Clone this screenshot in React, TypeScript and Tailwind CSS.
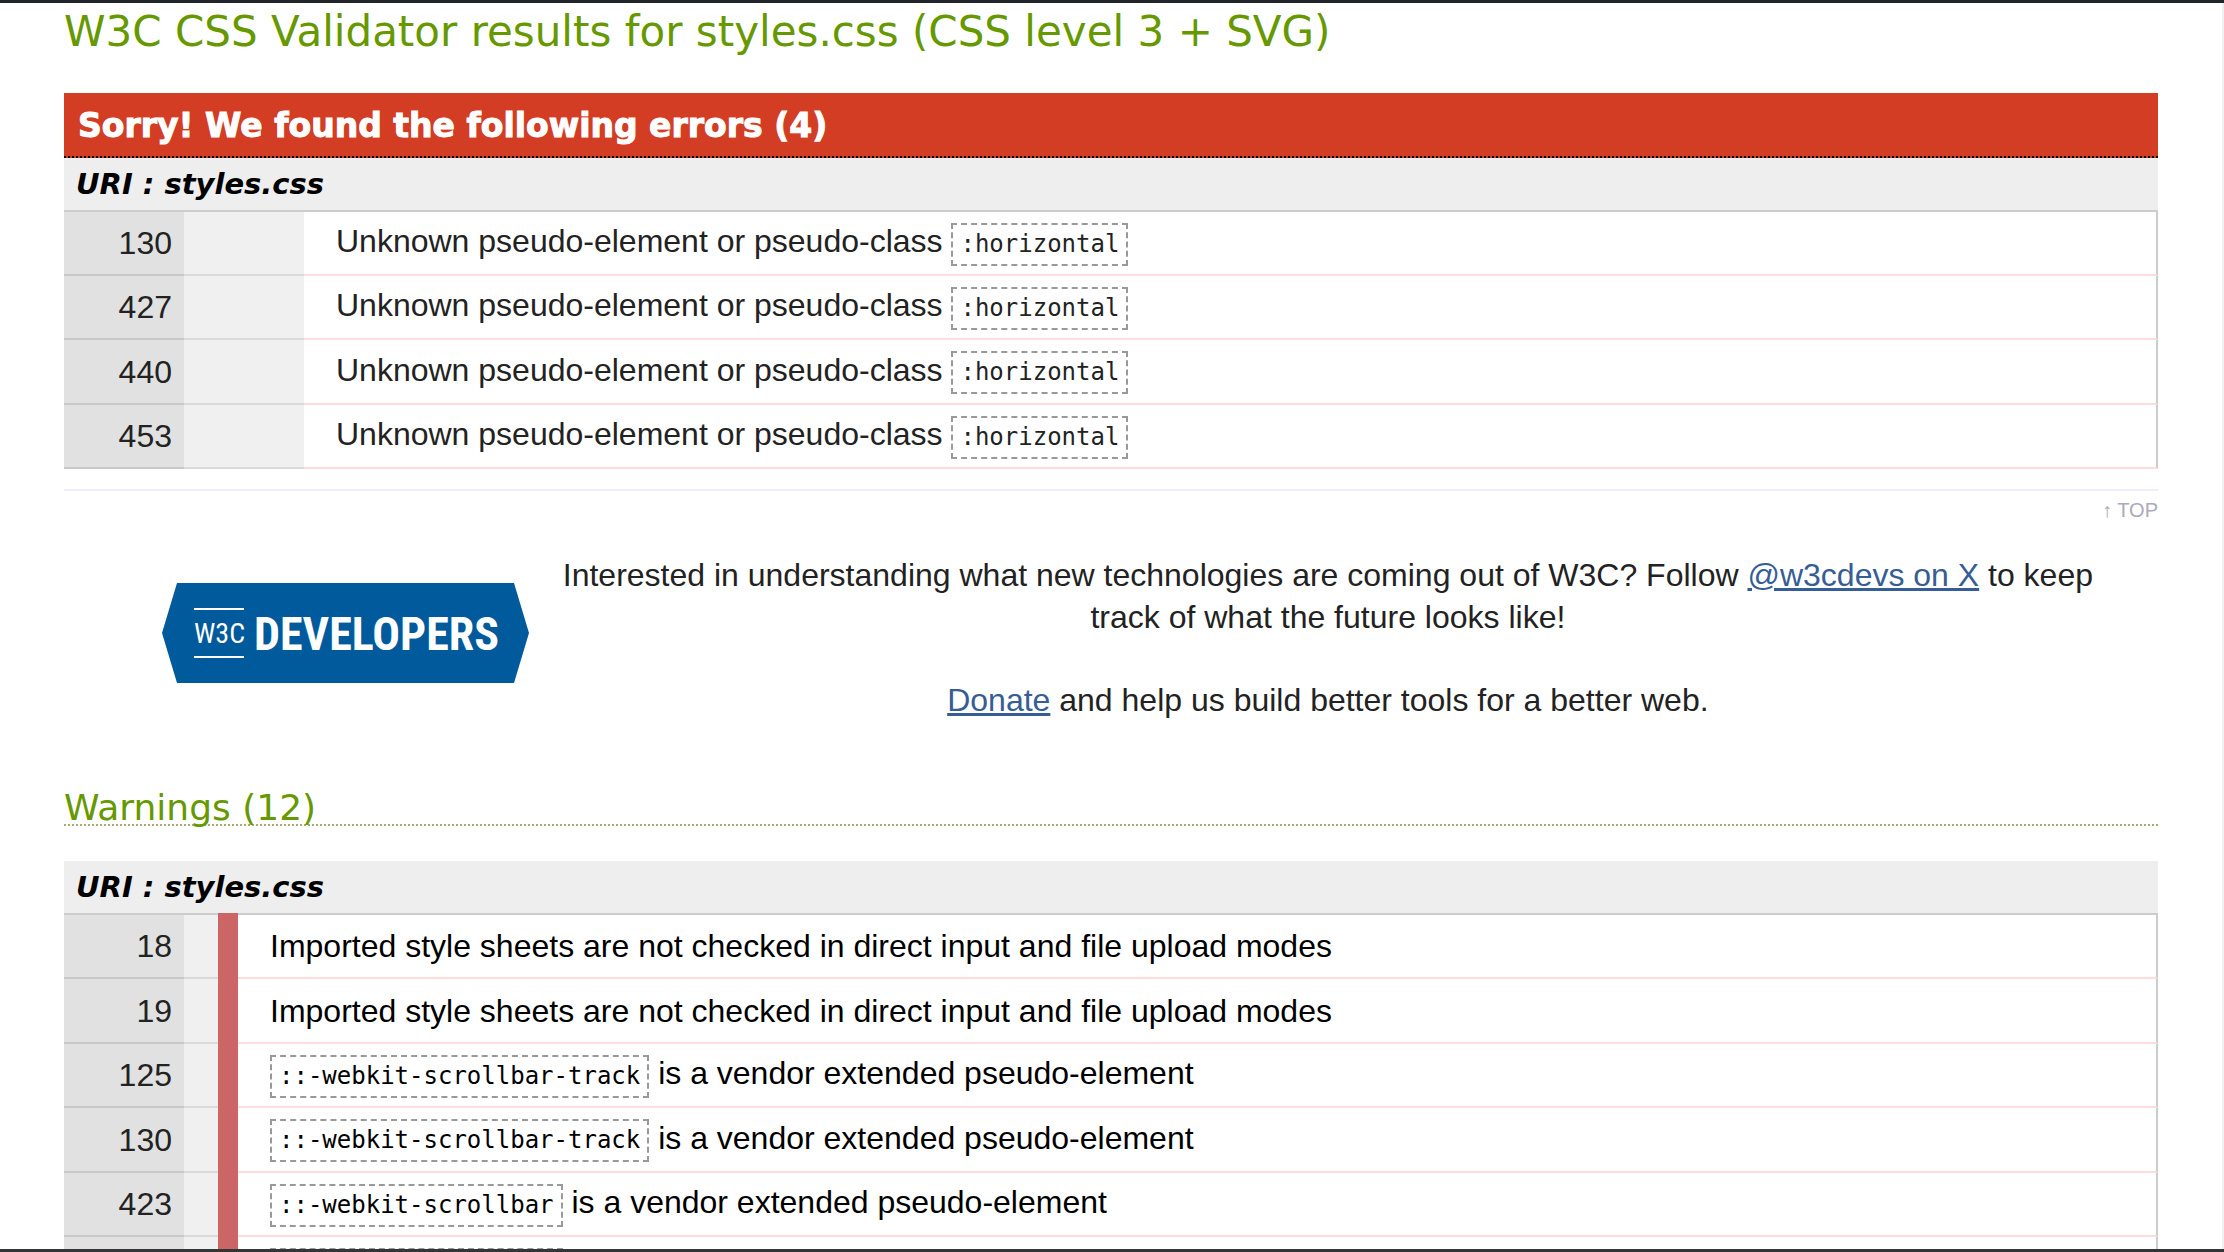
import React from "react";

type Row = { line: string; before?: string; code?: string; after?: string };

const pseudo = "Unknown pseudo-element or pseudo-class ";

const errors: Row[] = [
  { line: "130", before: pseudo, code: ":horizontal" },
  { line: "427", before: pseudo, code: ":horizontal" },
  { line: "440", before: pseudo, code: ":horizontal" },
  { line: "453", before: pseudo, code: ":horizontal" },
];

const imported = "Imported style sheets are not checked in direct input and file upload modes";
const vendor = " is a vendor extended pseudo-element";

const warnings: Row[] = [
  { line: "18", before: imported },
  { line: "19", before: imported },
  { line: "125", code: "::-webkit-scrollbar-track", after: vendor },
  { line: "130", code: "::-webkit-scrollbar-track", after: vendor },
  { line: "423", code: "::-webkit-scrollbar", after: vendor },
  { line: "427", code: "::-webkit-scrollbar", after: vendor },
];

function Code({ children }: { children: React.ReactNode }) {
  return (
    <code className="inline-block border-2 border-dashed border-[#999] px-[7px] align-middle font-['DejaVu_Sans_Mono',monospace] text-[24px] leading-[39px]">
      {children}
    </code>
  );
}

function UriHeading() {
  return (
    <h4 className="bg-[#eee] px-3 font-['DejaVu_Sans',sans-serif] text-[29px] leading-[52px] font-bold text-black italic">
      URI : styles.css
    </h4>
  );
}

function ResultTable({ rows, warning = false }: { rows: Row[]; warning?: boolean }) {
  return (
    <table className="w-full border-separate border-spacing-0">
      <tbody>
        {rows.map((row, i) => {
          const top = i === 0 ? "border-t-2 border-t-[#ccc]" : "";
          const height = i === 0 ? "h-[66px]" : warning ? "h-16 even:h-[65px]" : "h-16 nth-3:h-[65px]";
          return (
            <tr key={i} className={height}>
              <td className={`${top} w-[120px] border-b-2 border-b-[#c8c8c8] bg-[#e1e1e1] pr-3 text-right text-[#222]`}>
                {row.line}
              </td>
              <td
                className={`${top} ${warning ? "w-[34px]" : "w-[120px]"} border-b-2 border-b-[#dadada] bg-[#f0f0f0]`}
              />
              {warning && <td className="w-5 bg-[#c66]" />}
              <td
                className={`${top} border-r-2 border-b-2 border-r-[#ccc] border-b-[#fdd] pl-8 whitespace-nowrap ${
                  warning ? "text-black" : "text-[#222]"
                }`}
              >
                {row.before}
                {row.code && <Code>{row.code}</Code>}
                {row.after}
              </td>
            </tr>
          );
        })}
      </tbody>
    </table>
  );
}

function DevelopersLogo() {
  return (
    <svg viewBox="0 0 368 100" className="h-[100px] w-[368px]" role="img" aria-label="W3C Developers">
      <path d="M15 0H352L367 50L352 100H15L0 50Z" fill="#005a9c" />
      <path d="M32 26H82M32 74H82" stroke="#fff" strokeWidth="2" />
      <text x="32" y="60" fill="#fff" fontFamily="'Roboto Condensed', 'Liberation Sans Narrow', sans-serif" fontSize="28">
        W3C
      </text>
      <text
        x="92"
        y="67"
        fill="#fff"
        fontFamily="'Liberation Sans Narrow', 'Roboto Condensed', sans-serif"
        fontWeight="700"
        fontSize="46"
      >
        DEVELOPERS
      </text>
    </svg>
  );
}

export default function App() {
  return (
    <div className="h-screen overflow-hidden border-t-3 border-b-3 border-t-[#212529] border-b-[#333537] bg-white">
      <main className="h-full overflow-hidden border-r-2 border-[#f0f0f0] pr-16 pl-16 font-['Liberation_Sans',Arial,sans-serif] text-[32px] leading-[42px] text-[#222]">
        <h2 className="pb-8 font-['DejaVu_Sans',sans-serif] text-[42px] leading-[58px] text-[#690]">
          W3C CSS Validator results for styles.css (CSS level 3 + SVG)
        </h2>

        <section>
          <h3 className="border-b-2 border-dotted border-black bg-[#d23d24] px-[14px] pt-[3px] font-['DejaVu_Sans',sans-serif] text-[33px] leading-[60px] font-bold text-white [-webkit-text-stroke:1px_white]">
            Sorry! We found the following errors (4)
          </h3>
          <UriHeading />
          <ResultTable rows={errors} />
        </section>

        <div className="mt-5 border-t-2 border-[#eef] text-right">
          <a href="#top" className="block text-[20px] leading-[38px] text-[#aab]">
            ↑ TOP
          </a>
        </div>

        <section className="mt-[25px] flex justify-between pr-[65px] pl-[98px]">
          <a href="#developers" className="mt-[29px] block">
            <DevelopersLogo />
          </a>
          <div className="text-center">
            <p>
              Interested in understanding what new technologies are coming out of W3C? Follow{" "}
              <a href="#w3cdevs" className="text-[#365d95] underline">
                @w3cdevs on X
              </a>{" "}
              to keep
              <br />
              track of what the future looks like!
            </p>
            <p className="mt-[41px]">
              <a href="#donate" className="text-[#365d95] underline">
                Donate
              </a>{" "}
              and help us build better tools for a better web.
            </p>
          </div>
        </section>

        <section className="mt-[71px]">
          <h3 className="mb-[35px] border-b-2 border-dotted border-[#aa7] font-['DejaVu_Sans',sans-serif] text-[36px] leading-8 text-[#690]">
            Warnings (12)
          </h3>
          <UriHeading />
          <ResultTable rows={warnings} warning />
        </section>
      </main>
    </div>
  );
}
